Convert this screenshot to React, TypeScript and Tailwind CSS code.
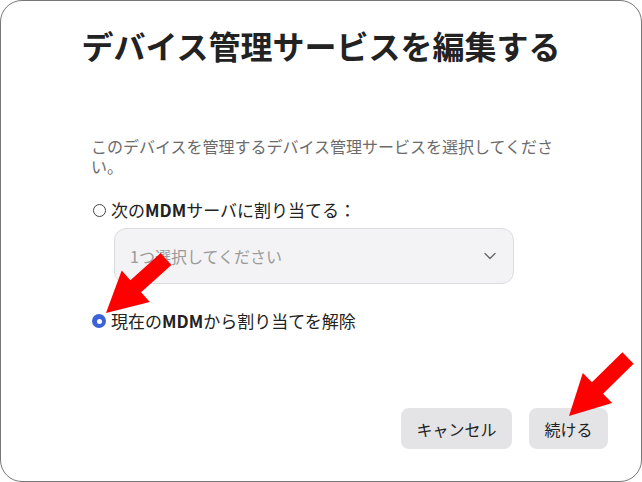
import { ChevronDown } from 'lucide-react';

type Pt = [number, number];

function arrowPoints(tail: Pt, tip: Pt, shaft = 8, head = 21, headLen = 40) {
  const dx = tip[0] - tail[0];
  const dy = tip[1] - tail[1];
  const len = Math.hypot(dx, dy);
  const ux = dx / len;
  const uy = dy / len;
  const nx = -uy;
  const ny = ux;
  const bx = tip[0] - ux * headLen;
  const by = tip[1] - uy * headLen;
  const pts: Pt[] = [
    [tail[0] + nx * shaft, tail[1] + ny * shaft],
    [bx + nx * shaft, by + ny * shaft],
    [bx + nx * head, by + ny * head],
    tip,
    [bx - nx * head, by - ny * head],
    [bx - nx * shaft, by - ny * shaft],
    [tail[0] - nx * shaft, tail[1] - ny * shaft],
  ];
  return pts.map((p) => `${p[0].toFixed(1)},${p[1].toFixed(1)}`).join(' ');
}

export default function App() {
  return (
    <div
      className="relative h-[482px] w-[642px] overflow-hidden rounded-[22px] border border-[#777] bg-white text-[#222]"
      style={{ fontFamily: '"Noto Sans CJK JP", "Noto Sans", sans-serif' }}
    >
      <h1 className="pt-[22px] text-center text-[32px] font-bold leading-[44px] text-[#222]">
        デバイス管理サービスを編集する
      </h1>

      <div className="ml-[90px] mt-[69px] w-[470px]">
        <p className="text-[16px] leading-[20px] text-[#6b6b6b]">
          このデバイスを管理するデバイス管理サービスを選択してください。
        </p>

        <label className="mt-[22px] flex h-[24px] items-center gap-[5px] text-[17px]">
          <span className="ml-[2px] h-[13px] w-[13px] rounded-full border-[1.5px] border-[#444] bg-white" />
          <span>
            次の<b>MDM</b>サーバに割り当てる：
          </span>
        </label>

        <div className="ml-[23px] mt-[6px] flex h-[56px] w-[400px] items-center justify-between rounded-[12px] border border-[#dcdcdf] bg-[#f3f3f5] pl-[15px] pr-[13px]">
          <span className="text-[16px] text-[#9a9a9a]">1つ選択してください</span>
          <ChevronDown size={20} strokeWidth={1.6} className="text-[#666]" />
        </div>

        <label className="mt-[25px] flex h-[24px] items-center gap-[5px] text-[17px]">
          <span className="ml-[1px] flex h-[14px] w-[14px] items-center justify-center rounded-full bg-[#3b62d6]">
            <span className="h-[5px] w-[5px] rounded-full bg-white" />
          </span>
          <span>
            現在の<b>MDM</b>から割り当てを解除
          </span>
        </label>
      </div>

      <div className="mr-[33px] mt-[75px] flex justify-end gap-[17px]">
        <button className="h-[41px] w-[111px] rounded-[8px] bg-[#e4e4e6] text-[16px] text-[#222]">
          キャンセル
        </button>
        <button className="h-[41px] w-[79px] rounded-[8px] bg-[#e4e4e6] text-[16px] text-[#222]">
          続ける
        </button>
      </div>

      <svg className="pointer-events-none absolute left-0 top-0" width="642" height="482">
        <polygon points={arrowPoints([165, 258], [105, 312])} fill="#ff0000" />
        <polygon points={arrowPoints([627, 357], [568, 415])} fill="#ff0000" />
      </svg>
    </div>
  );
}
